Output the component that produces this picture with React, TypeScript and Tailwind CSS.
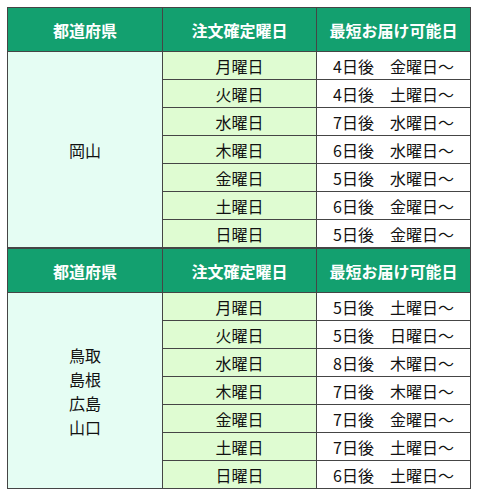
import React from "react";

const font = { fontFamily: '"Noto Sans CJK JP", "Noto Sans", sans-serif' };

type Row = [string, string];

const t1: Row[] = [
  ["月曜日", "4日後　金曜日～"],
  ["火曜日", "4日後　土曜日～"],
  ["水曜日", "7日後　水曜日～"],
  ["木曜日", "6日後　水曜日～"],
  ["金曜日", "5日後　水曜日～"],
  ["土曜日", "6日後　金曜日～"],
  ["日曜日", "5日後　金曜日～"],
];

const t2: Row[] = [
  ["月曜日", "5日後　土曜日～"],
  ["火曜日", "5日後　日曜日～"],
  ["水曜日", "8日後　木曜日～"],
  ["木曜日", "7日後　木曜日～"],
  ["金曜日", "7日後　金曜日～"],
  ["土曜日", "7日後　土曜日～"],
  ["日曜日", "6日後　土曜日～"],
];

function Table({ pref, rows }: { pref: string[]; rows: Row[] }) {
  const th =
    "flex items-center justify-center bg-[#13a06f] text-white font-bold text-[16px] border-r border-b border-[#454545]";
  return (
    <div className="grid grid-cols-[155px_154px_154px] grid-rows-[44px_repeat(7,28px)] border-l border-t border-[#454545] w-[464px]">
      <div className={th}>都道府県</div>
      <div className={th}>注文確定曜日</div>
      <div className={th}>最短お届け可能日</div>
      <div className="row-span-7 flex flex-col items-center justify-center bg-[#e5fdf3] border-r border-b border-[#454545] text-[16px] leading-[24px] text-[#111]">
        {pref.map((p) => (
          <div key={p}>{p}</div>
        ))}
      </div>
      {rows.map(([d, r], i) => (
        <React.Fragment key={i}>
          <div className="flex items-center justify-center bg-[#dffcd2] border-r border-b border-[#454545] text-[16px] text-[#111]">
            {d}
          </div>
          <div className="flex items-center justify-center bg-white border-r border-b border-[#454545] text-[16px] text-[#111] whitespace-pre">
            {r}
          </div>
        </React.Fragment>
      ))}
    </div>
  );
}

export default function App() {
  return (
    <div className="w-[480px] h-[495px] bg-white pt-[7px] pl-[7px]" style={font}>
      <Table pref={["岡山"]} rows={t1} />
      <Table pref={["鳥取", "島根", "広島", "山口"]} rows={t2} />
    </div>
  );
}
